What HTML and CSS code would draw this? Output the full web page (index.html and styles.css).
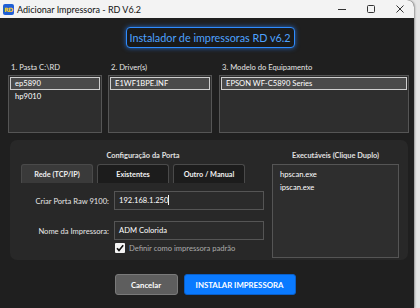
FILE: index.html
```html
<!DOCTYPE html>
<html lang="pt-BR">
<head>
    <meta charset="UTF-8">
    <title>Adicionar Impressora - RD V6.2</title>
    <link rel="stylesheet" href="styles.css">
</head>
<body>
    <div class="window">
        <div class="titlebar">
            <div class="app-icon"><span>RD</span></div>
            <span class="title">Adicionar Impressora - RD V6.2</span>
            <div class="controls">
                <span class="ctl">
                    <svg width="10" height="10" viewBox="0 0 10 10"><path d="M1 5.5h8" stroke="#333" stroke-width="1"/></svg>
                </span>
                <span class="ctl">
                    <svg width="10" height="10" viewBox="0 0 10 10"><rect x="1.5" y="1.5" width="7" height="7" rx="1" fill="none" stroke="#333" stroke-width="1"/></svg>
                </span>
                <span class="ctl">
                    <svg width="10" height="10" viewBox="0 0 10 10"><path d="M1.5 1.5l7 7M8.5 1.5l-7 7" stroke="#333" stroke-width="1"/></svg>
                </span>
            </div>
        </div>

        <div class="content">
            <div class="header">
                <div class="header-box">Instalador de impressoras RD v6.2</div>
            </div>

            <div class="columns">
                <div class="col col-1">
                    <div class="col-label">1. Pasta C:\RD</div>
                    <div class="listbox">
                        <div class="item selected">ep5890</div>
                        <div class="item">hp9010</div>
                    </div>
                </div>
                <div class="col col-2">
                    <div class="col-label">2. Driver(s)</div>
                    <div class="listbox">
                        <div class="item selected">E1WF1BPE.INF</div>
                    </div>
                </div>
                <div class="col col-3">
                    <div class="col-label">3. Modelo do Equipamento</div>
                    <div class="listbox">
                        <div class="item selected">EPSON WF-C5890 Series</div>
                    </div>
                </div>
            </div>

            <div class="panel">
                <div class="port">
                    <div class="section-title">Configuração da Porta</div>
                    <div class="tabs">
                        <div class="tab active">Rede (TCP/IP)</div>
                        <div class="tab">Existentes</div>
                        <div class="tab">Outro / Manual</div>
                    </div>
                    <div class="form-row">
                        <label class="form-label">Criar Porta Raw 9100:</label>
                        <div class="input">192.168.1.250<span class="caret"></span></div>
                    </div>
                    <div class="form-row">
                        <label class="form-label">Nome da Impressora:</label>
                        <div class="input">ADM Colorida</div>
                    </div>
                    <div class="check-row">
                        <span class="checkbox">
                            <svg width="10" height="10" viewBox="0 0 10 10"><path d="M2 5.2l2 2.2L8.2 2.2" fill="none" stroke="#111" stroke-width="1.6"/></svg>
                        </span>
                        <span class="check-text">Definir como impressora padrão</span>
                    </div>
                </div>
                <div class="exes">
                    <div class="section-title">Executáveis (Clique Duplo)</div>
                    <div class="listbox exe-list">
                        <div class="item">hpscan.exe</div>
                        <div class="item">ipscan.exe</div>
                    </div>
                </div>
            </div>

            <div class="actions">
                <button class="btn btn-cancel">Cancelar</button>
                <button class="btn btn-install">INSTALAR IMPRESSORA</button>
            </div>
        </div>
    </div>
</body>
</html>
```

FILE: styles.css
```css
body {
    margin: 0;
    background: #e6e6e6;
    font-family: Lato, 'Noto Sans', sans-serif;
    width: 420px;
    height: 308px;
    overflow: hidden;
}
.window {
    width: 414px;
    height: 308px;
    background: #1f1f1f;
    border-radius: 0 7px 0 0;
    overflow: hidden;
    box-shadow: 1px 0 2px rgba(0, 0, 0, 0.35);
}
.titlebar {
    height: 18px;
    background: #f3f3f3;
    display: flex;
    align-items: center;
}
.app-icon {
    width: 11px;
    height: 11px;
    margin-left: 3px;
    background: #1f5fd6;
    border-radius: 2px;
    display: flex;
    align-items: center;
    justify-content: center;
}
.app-icon span {
    font-family: 'DejaVu Sans', sans-serif;
    font-size: 6px;
    font-weight: 700;
    color: #ffd21e;
    letter-spacing: -0.5px;
}
.title {
    margin-left: 3px;
    font-size: 9px;
    color: #111;
    white-space: nowrap;
}
.controls {
    margin-left: auto;
    display: flex;
}
.ctl {
    width: 29px;
    height: 18px;
    display: flex;
    align-items: center;
    justify-content: center;
}
.content {
    padding: 9px 5px 0 8px;
}
.header {
    display: flex;
    justify-content: center;
    padding-left: 3px;
}
.header-box {
    width: 167px;
    height: 19px;
    border: 1px solid #2f8cff;
    border-radius: 4px;
    background: #1a1a1a;
    box-shadow: 0 0 5px rgba(40, 130, 255, 0.75);
    color: #4ea2ff;
    font-size: 10.8px;
    line-height: 19px;
    text-align: center;
    white-space: nowrap;
}
.columns {
    display: flex;
    gap: 6px;
    margin-top: 13px;
}
.col-1 { width: 94px; }
.col-2 { width: 104px; }
.col-3 { width: 190px; margin-left: 1px; }
.col-label {
    font-size: 7.6px;
    color: #e6e6e6;
    height: 14px;
    line-height: 12px;
    padding-left: 3px;
    white-space: nowrap;
}
.listbox {
    height: 54px;
    background: #2e2e2e;
    border: 1px solid #555;
    padding: 1px;
}
.item {
    font-size: 7.6px;
    color: #fff;
    height: 11px;
    line-height: 11px;
    padding: 0 4px;
    border: 1px solid transparent;
    white-space: nowrap;
}
.item.selected {
    background: #4a4a4a;
    border-color: #cfcfcf;
}
.panel {
    margin: 7px 0 0 2px;
    width: 398px;
    height: 120px;
    background: #282828;
    border-radius: 7px;
    display: flex;
}
.port {
    width: 256px;
}
.section-title {
    font-size: 7.4px;
    font-weight: 700;
    color: #e0e0e0;
    text-align: center;
    margin-top: 10px;
    height: 14px;
    line-height: 12px;
    white-space: nowrap;
}
.port .section-title {
    padding-left: 10px;
}
.tabs {
    display: flex;
    gap: 4px;
    margin-left: 11px;
}
.tab {
    width: 70px;
    height: 18px;
    border: 1px solid #4a4a4a;
    border-bottom: none;
    border-radius: 3px 3px 0 0;
    background: #1c1c1c;
    color: #f0f0f0;
    font-size: 7.3px;
    font-weight: 700;
    line-height: 19px;
    text-align: center;
    white-space: nowrap;
}
.tab.active {
    background: #3a3a3a;
}
.form-row {
    display: flex;
    align-items: center;
    margin-top: 8px;
}
.form-row + .form-row {
    margin-top: 11px;
}
.form-label {
    width: 99px;
    text-align: right;
    font-size: 7.6px;
    color: #e6e6e6;
    white-space: nowrap;
}
.input {
    margin-left: 5px;
    width: 140px;
    height: 17px;
    border: 1px solid #555;
    background: #2b2b2b;
    color: #fff;
    font-size: 7.6px;
    line-height: 17px;
    padding: 0 4px;
}
.caret {
    display: inline-block;
    width: 1px;
    height: 10px;
    background: #f2f2f2;
    vertical-align: -2px;
}
.check-row {
    display: flex;
    align-items: center;
    margin: 3px 0 0 105px;
}
.checkbox {
    width: 10px;
    height: 10px;
    background: #f4f4f4;
    border-radius: 1px;
    display: flex;
}
.check-text {
    margin-left: 4px;
    font-size: 7.6px;
    color: #ababab;
    white-space: nowrap;
}
.exes {
    margin-left: 6px;
    width: 127px;
}
.exe-list {
    height: 86px;
    padding: 3px 4px;
}
.exe-list .item {
    height: 13px;
    line-height: 13px;
    padding: 0 3px;
    border: none;
}
.actions {
    display: flex;
    justify-content: center;
    gap: 6px;
    margin-top: 14px;
    padding-right: 7px;
}
.btn {
    height: 21px;
    border-radius: 3px;
    font-family: Lato, 'Noto Sans', sans-serif;
    font-size: 7.8px;
    font-weight: 700;
    color: #fff;
    padding: 0;
}
.btn-cancel {
    width: 63px;
    background: #5e5e5e;
    border: 1px solid #7a7a7a;
}
.btn-install {
    width: 112px;
    background: #0a7aff;
    border: 1px solid #0a5fc8;
}
```
